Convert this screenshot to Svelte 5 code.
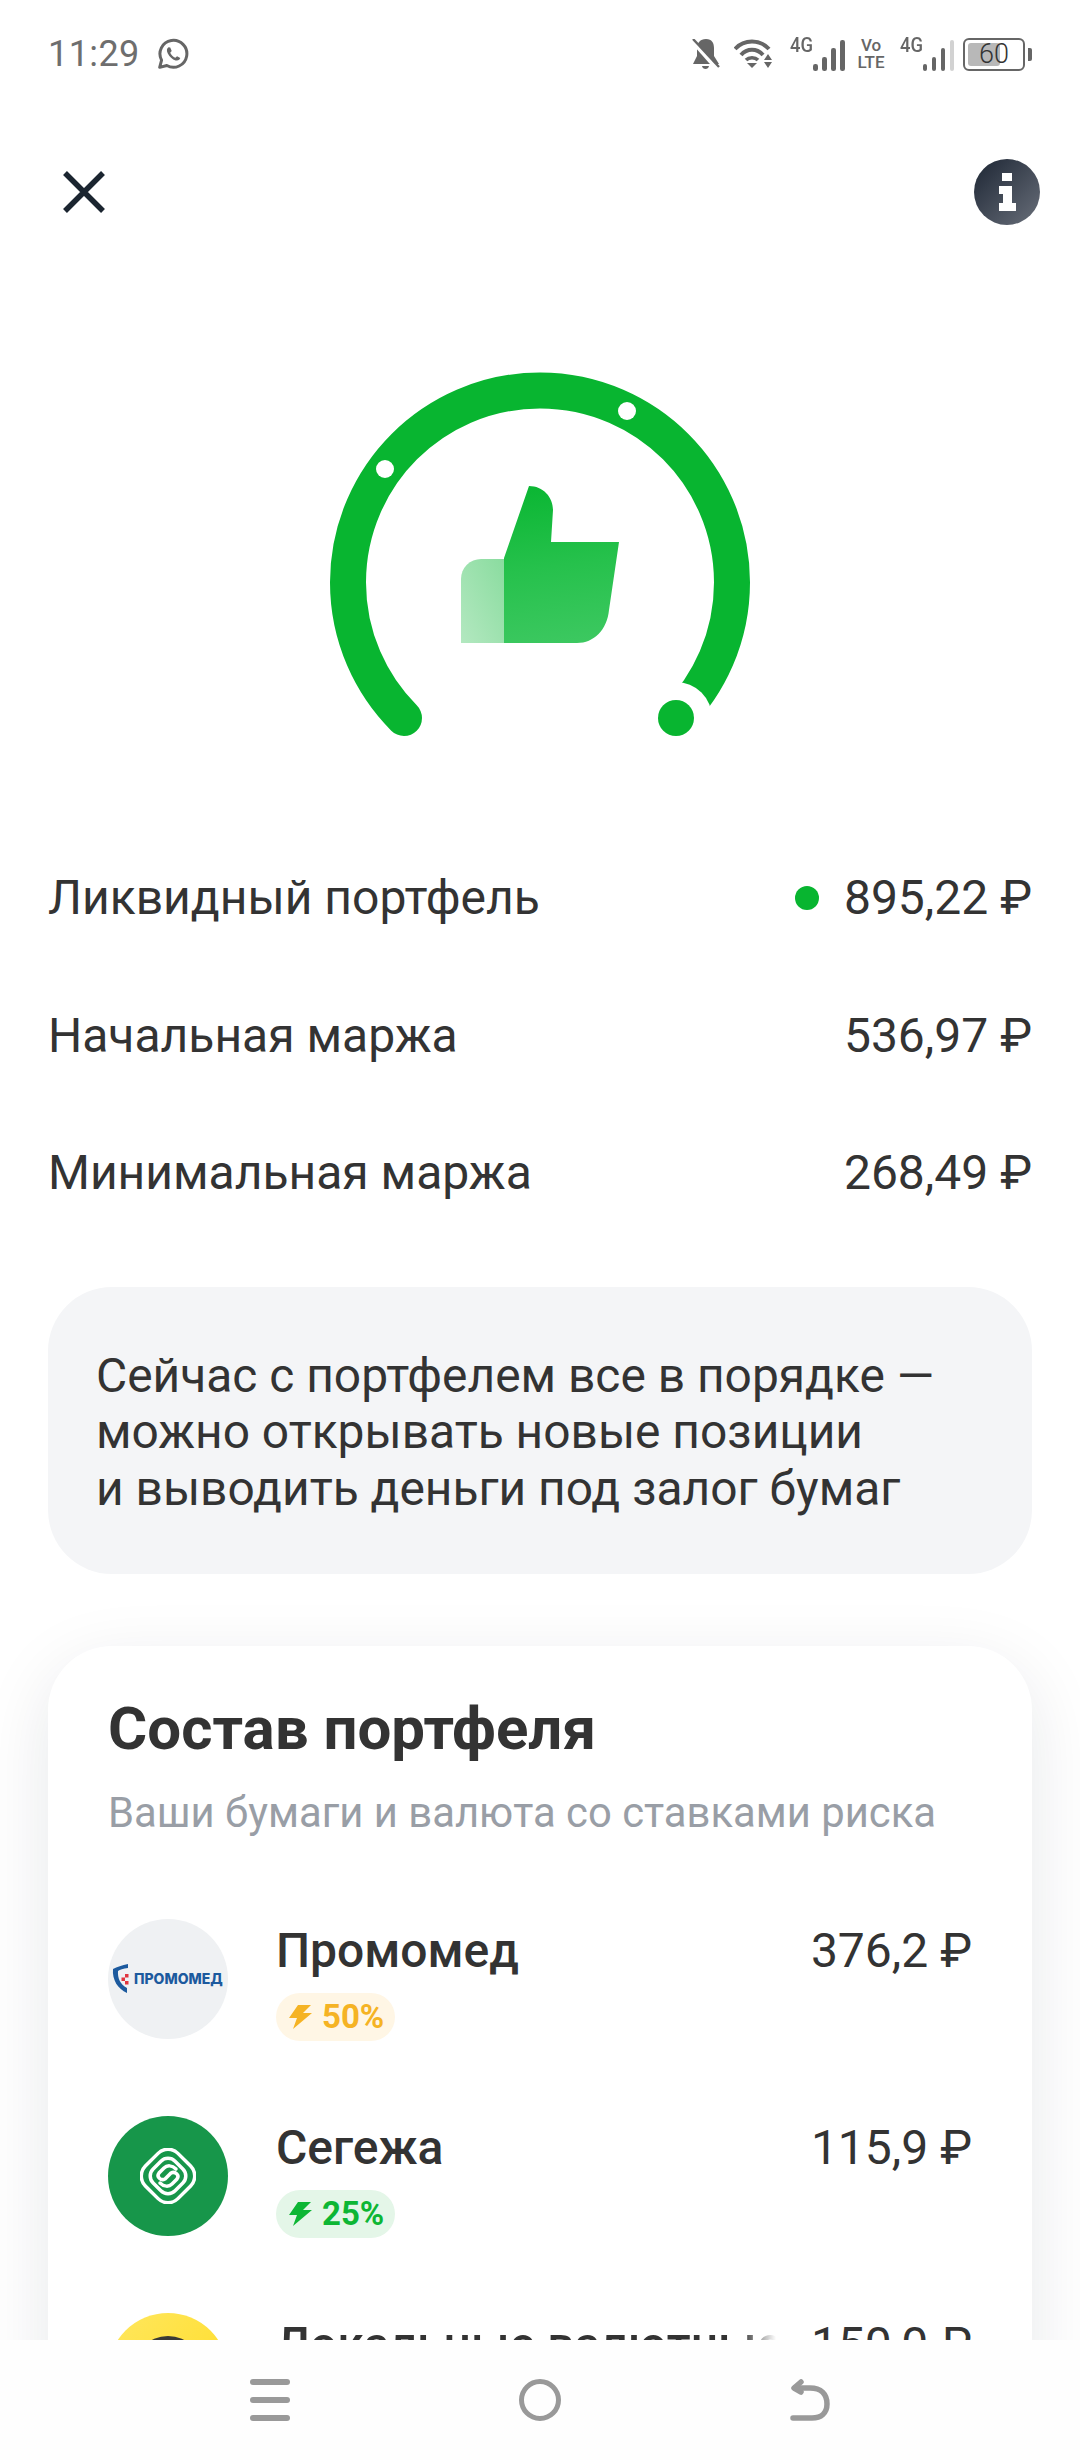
<script>
  const rows = [
    { label: 'Ликвидный портфель', value: '895,22 ₽', dot: true },
    { label: 'Начальная маржа', value: '536,97 ₽', dot: false },
    { label: 'Минимальная маржа', value: '268,49 ₽', dot: false }
  ];
  const bolt = 'M9 0 L22 0 L14 8 L23 8 L4 24 L8 13 L0 13 Z';
</script>

<div class="screen">
  <div class="status">
    <div class="status-left">
      <span class="time">11:29</span>
      <svg class="wa" width="32" height="32" viewBox="0 0 30 30" fill="none">
        <path d="M2.500 27.500 L4.300 20.800 A12.600 12.600 0 1 1 9.200 25.800 Z" stroke="#666" stroke-width="2.800" stroke-linejoin="round"/>
        <path d="M10.800 8.600 C9.200 9.600 8.800 11.600 10 14.200 C11.600 17.600 14.400 20 17.400 21 C19.600 21.600 21.400 20.600 21.800 18.800 L18.800 17 L17.200 18.600 C15.200 17.800 13.200 15.800 12.400 13.800 L13.800 12.200 L12.400 8.800 Z" fill="#666"/>
      </svg>
    </div>
    <div class="status-right">
      <svg class="i-bell" width="28" height="31" viewBox="0 0 28 31">
        <path d="M14 0 C20 0 22 4 22 9 L22 17 L27 25 L1 25 L5 17 L5 9 C5 4 8 0 14 0 Z" fill="#666"/>
        <path d="M10 27 H17 C16.500 31 10.500 31 10 27 Z" fill="#666"/>
        <path d="M2 4 L25 30" stroke="#fff" stroke-width="4"/>
        <path d="M1 0 L27 28" stroke="#666" stroke-width="2.400"/>
      </svg>
      <svg class="i-wifi" width="38" height="30" viewBox="0 0 38 30" fill="none">
        <path d="M1 10 C10 0 26 0 35 10" stroke="#666" stroke-width="4"/>
        <path d="M7 16 C13 9 23 9 29 16" stroke="#666" stroke-width="4"/>
        <path d="M12 21 C15 18 21 18 24 21" stroke="#666" stroke-width="3.600"/>
        <path d="M13 24 L23 24 L18 29 Z" fill="#666"/>
        <path d="M34 15 L38 21 L30 21 Z M30 23 L38 23 L34 29 Z" fill="#666"/>
      </svg>
      <div class="net">
        <span class="g4">4G</span>
        <div class="bars">
          <i style="height:7px"></i><i style="height:14px"></i><i style="height:23px"></i><i style="height:31px"></i>
        </div>
      </div>
      <div class="volte"><span>Vo</span><span>LTE</span></div>
      <div class="net">
        <span class="g4">4G</span>
        <div class="bars">
          <i style="height:7px"></i><i style="height:14px"></i><i style="height:23px"></i><i class="off" style="height:31px"></i>
        </div>
      </div>
      <div class="battery">
        <div class="batt-fill"></div>
        <span>60</span>
      </div>
      <div class="nub"></div>
    </div>
  </div>

  <div class="header">
    <svg width="44" height="42" viewBox="0 0 44 42" fill="none">
      <path d="M3 2 L41 40 M41 2 L3 40" stroke="#1b2530" stroke-width="5.500"/>
    </svg>
    <svg width="66" height="66" viewBox="0 0 66 66">
      <defs>
        <linearGradient id="ig" x1="0" y1="0" x2="1" y2="1">
          <stop offset="0" stop-color="#1d2634"/>
          <stop offset="1" stop-color="#686e79"/>
        </linearGradient>
      </defs>
      <circle cx="33" cy="33" r="33" fill="url(#ig)"/>
      <path d="M28 14 H38 V22 H28 Z M25 27 H38 V44 H42 V52 H25 V44 H29 V35 H25 Z" fill="#fff"/>
    </svg>
  </div>

  <svg class="gauge" width="420" height="380" viewBox="330 372 420 380" fill="none">
    <defs>
      <linearGradient id="th" x1="0.5" y1="0" x2="0.6" y2="1">
        <stop offset="0" stop-color="#0cb734"/>
        <stop offset="0.5" stop-color="#26c14c"/>
        <stop offset="1" stop-color="#3cc860"/>
      </linearGradient>
      <linearGradient id="pl" x1="1" y1="0" x2="0" y2="1">
        <stop offset="0" stop-color="#8adc9f"/>
        <stop offset="1" stop-color="#b3e8c0"/>
      </linearGradient>
    </defs>
    <path d="M404 718 A192 192 0 1 1 676 718" stroke="#08b530" stroke-width="36" stroke-linecap="round"/>
    <circle cx="676" cy="718" r="36" fill="#fff"/>
    <circle cx="676" cy="718" r="18" fill="#08b530"/>
    <circle cx="627" cy="411" r="9" fill="#fff"/>
    <circle cx="385" cy="469" r="9" fill="#fff"/>
    <path d="M504 559 H481 A20 20 0 0 0 461 579 V643 H504 Z" fill="url(#pl)"/>
    <path d="M504 643 V558 L529 486 C543 486 553 497 553 510 L551 542 H619 L609 610 C607 630 594 643 577 643 Z" fill="url(#th)"/>
  </svg>

  <div class="rows">
    {#each rows as r}
      <div class="row">
        <span>{r.label}</span>
        <span class="val">
          {#if r.dot}<i class="dot"></i>{/if}
          {r.value}
        </span>
      </div>
    {/each}
  </div>

  <div class="note">
    Сейчас с портфелем все в порядке —<br />
    можно открывать новые позиции<br />
    и выводить деньги под залог бумаг
  </div>

  <div class="card">
    <h2>Состав портфеля</h2>
    <p class="sub">Ваши бумаги и валюта со ставками риска</p>

    <div class="item">
      <div class="logo logo-pm">
        <svg width="18" height="30" viewBox="0 0 18 30">
          <path d="M16 0 L16 4 C11 4.500 8 5.500 6 7 C5.500 14 8 20 15 24 L15 29 C6 25 0 16 1 5 C5 3 10 1 16 0 Z" fill="#1c5a9e"/>
          <rect x="13" y="10" width="3.500" height="3.500" fill="#e0353f"/>
          <rect x="9.500" y="13.500" width="3.500" height="3.500" fill="#e0353f"/>
          <rect x="13" y="17" width="3.500" height="3.500" fill="#e0353f"/>
        </svg>
        <span>ПРОМОМЕД</span>
      </div>
      <div class="info">
        <div class="name">Промомед</div>
        <div class="badge orange">
          <svg width="23" height="24" viewBox="0 0 23 24"><path d={bolt} fill="#f5b324"/></svg>
          50%
        </div>
      </div>
      <div class="price">376,2 ₽</div>
    </div>

    <div class="item">
      <div class="logo logo-sg">
        <svg width="56" height="56" viewBox="0 0 56 56" fill="none" stroke="#fff" stroke-width="3.500" stroke-linecap="round">
          <rect x="5" y="5" width="46" height="46" rx="14" transform="rotate(45 28 28)"/>
          <rect x="12.500" y="12.500" width="31" height="31" rx="10" transform="rotate(45 28 28)"/>
          <path d="M36 21 C32 17 27 17 24 20 L19 25 C16 29 21 33 25 31 L31 25 C35 23 40 27 37 31 L32 36 C29 39 24 39 20 35"/>
        </svg>
      </div>
      <div class="info">
        <div class="name">Сегежа</div>
        <div class="badge green">
          <svg width="23" height="24" viewBox="0 0 23 24"><path d={bolt} fill="#0db634"/></svg>
          25%
        </div>
      </div>
      <div class="price">115,9 ₽</div>
    </div>

    <div class="item">
      <div class="logo logo-y"><i></i></div>
      <div class="info">
        <div class="name fade">Локальные валютные</div>
      </div>
      <div class="price">150,0 ₽</div>
    </div>
  </div>

  <div class="nav">
    <svg width="40" height="42" viewBox="0 0 40 42" fill="#999">
      <rect width="40" height="6" rx="3"/><rect y="18" width="40" height="6" rx="3"/><rect y="36" width="40" height="6" rx="3"/>
    </svg>
    <svg width="42" height="42" viewBox="0 0 42 42" fill="none">
      <circle cx="21" cy="21" r="18.500" stroke="#999" stroke-width="5"/>
    </svg>
    <svg width="40" height="42" viewBox="0 0 40 42" fill="none" stroke="#999" stroke-width="5.500" stroke-linecap="round" stroke-linejoin="round">
      <path d="M11 3 L4 9 L11 13"/>
      <path d="M5 9 H20 C31 9 37 15 37 25 C37 34 31 39 22 39 H3"/>
    </svg>
  </div>
</div>

<style>
  :global(body) { margin: 0; background: #fff; }
  .screen {
    position: relative;
    width: 1080px;
    height: 2460px;
    overflow: hidden;
    background: #fff;
    font-family: Roboto, "Noto Sans", sans-serif;
    color: #333;
  }
  .status {
    height: 108px;
    padding: 0 48px;
    box-sizing: border-box;
    display: flex;
    justify-content: space-between;
    align-items: center;
    color: #666;
  }
  .status-left { display: flex; align-items: center; gap: 17px; }
  .time { font-size: 36px; font-weight: 400; letter-spacing: .4px; color: #6e6e6e; }
  .status-right { display: flex; align-items: center; height: 36px; }
  .i-bell { margin-right: 14px; }
  .i-wifi { margin-right: 18px; }
  .net { display: flex; align-items: flex-end; height: 34px; position: relative; }
  .g4 { font-size: 20px; font-weight: 500; line-height: 16px; align-self: flex-start; margin-top: 0; transform: scaleX(.92); transform-origin: left; width: 23px; color: #666; }
  .bars { display: flex; align-items: flex-end; gap: 4.500px; }
  .bars i { display: block; width: 4.500px; background: #666; border-radius: 2.200px; }
  .bars i.off { background: #d2d2d2; }
  .volte { width: 29px; display: flex; flex-direction: column; align-items: center; font-size: 17px; font-weight: 500; line-height: 17px; margin: 0 14px 0 12px; color: #666; }
  .battery {
    position: relative;
    width: 62px; height: 33px; box-sizing: border-box;
    border: 2.500px solid #666; border-radius: 6px;
    margin-left: 9px;
    display: flex; align-items: center; justify-content: center;
  }
  .batt-fill { position: absolute; left: 3px; top: 3px; bottom: 3px; width: 32px; background: #b8b8b8; border-radius: 3px; }
  .battery span { position: relative; font-size: 27px; font-weight: 300; color: #333; line-height: 1; }
  .nub { width: 4px; height: 13px; background: #666; margin-left: 3px; border-radius: 0 2px 2px 0; }

  .header {
    height: 168px;
    padding: 0 40px 0 62px;
    display: flex;
    align-items: center;
    justify-content: space-between;
    box-sizing: border-box;
  }
  .gauge { display: block; margin: 96px auto 77px; }

  .rows { padding: 0 48px; }
  .row {
    height: 137.500px;
    display: flex;
    align-items: center;
    justify-content: space-between;
    font-size: 48px;
    color: #333;
  }
  .val { display: flex; align-items: center; gap: 25px; }
  .dot { display: block; width: 24px; height: 24px; border-radius: 50%; background: #08b530; }

  .note {
    margin: 45px 48px 0;
    height: 287px;
    box-sizing: border-box;
    padding: 61px 48px 0;
    border-radius: 64px;
    background: #f4f5f7;
    font-size: 47.900px;
    line-height: 56.500px;
    color: #333;
  }

  .card {
    margin: 72px 48px 0;
    padding: 45px 60px 0;
    height: 1000px;
    box-sizing: border-box;
    background: #fff;
    border-radius: 64px;
    box-shadow: 0 20px 70px rgba(20, 30, 50, .1);
  }
  h2 { margin: 0; font-size: 60px; line-height: 76px; font-weight: 700; color: #333; }
  .sub { margin: 21px 0 0; font-size: 41.800px; line-height: 50px; color: #999ea6; }

  .item { display: flex; height: 197px; position: relative; }
  .sub + .item { margin-top: 81px; }
  .logo { width: 120px; height: 120px; border-radius: 50%; flex: none; display: flex; align-items: center; justify-content: center; }
  .logo-pm { background: #eff1f3; gap: 4px; justify-content: flex-start; padding-left: 4px; box-sizing: border-box; }
  .logo-pm span { font-family: Inter, Roboto, sans-serif; font-size: 14px; font-weight: 800; color: #1c5a9e; white-space: nowrap; }
  .logo-sg { background: #17964a; }
  .logo-y { background: linear-gradient(135deg, #ffe75f, #ffdb1f); position: relative; overflow: hidden; }
  .logo-y i { position: absolute; left: 24px; top: 23px; width: 72px; height: 72px; border-radius: 50%; background: #3a3a36; }

  .info { margin-left: 48px; flex: 1; min-width: 0; }
  .name { font-size: 48px; font-weight: 500; line-height: 58px; margin-top: 3px; color: #333; white-space: nowrap; }
  .name.fade { -webkit-mask-image: linear-gradient(90deg, #000 0, #000 465px, transparent 500px); mask-image: linear-gradient(90deg, #000 0, #000 465px, transparent 500px); }
  .price { font-size: 48px; line-height: 58px; margin-top: 3px; color: #333; white-space: nowrap; }
  .badge {
    margin-top: 13px;
    width: 119px; height: 48px; border-radius: 24px;
    display: flex; align-items: center; box-sizing: border-box; padding-left: 13px; gap: 10px;
    font-size: 33px; font-weight: 700;
  }
  .orange { background: #fff6e5; color: #f5b324; }
  .green { background: #e4f6e8; color: #0db634; }

  .nav {
    position: absolute;
    left: 0; right: 0; bottom: 0;
    height: 120px;
    background: #fefefe;
    display: flex;
    align-items: center;
    justify-content: space-between;
    padding: 0 250px;
    box-sizing: border-box;
  }
</style>
